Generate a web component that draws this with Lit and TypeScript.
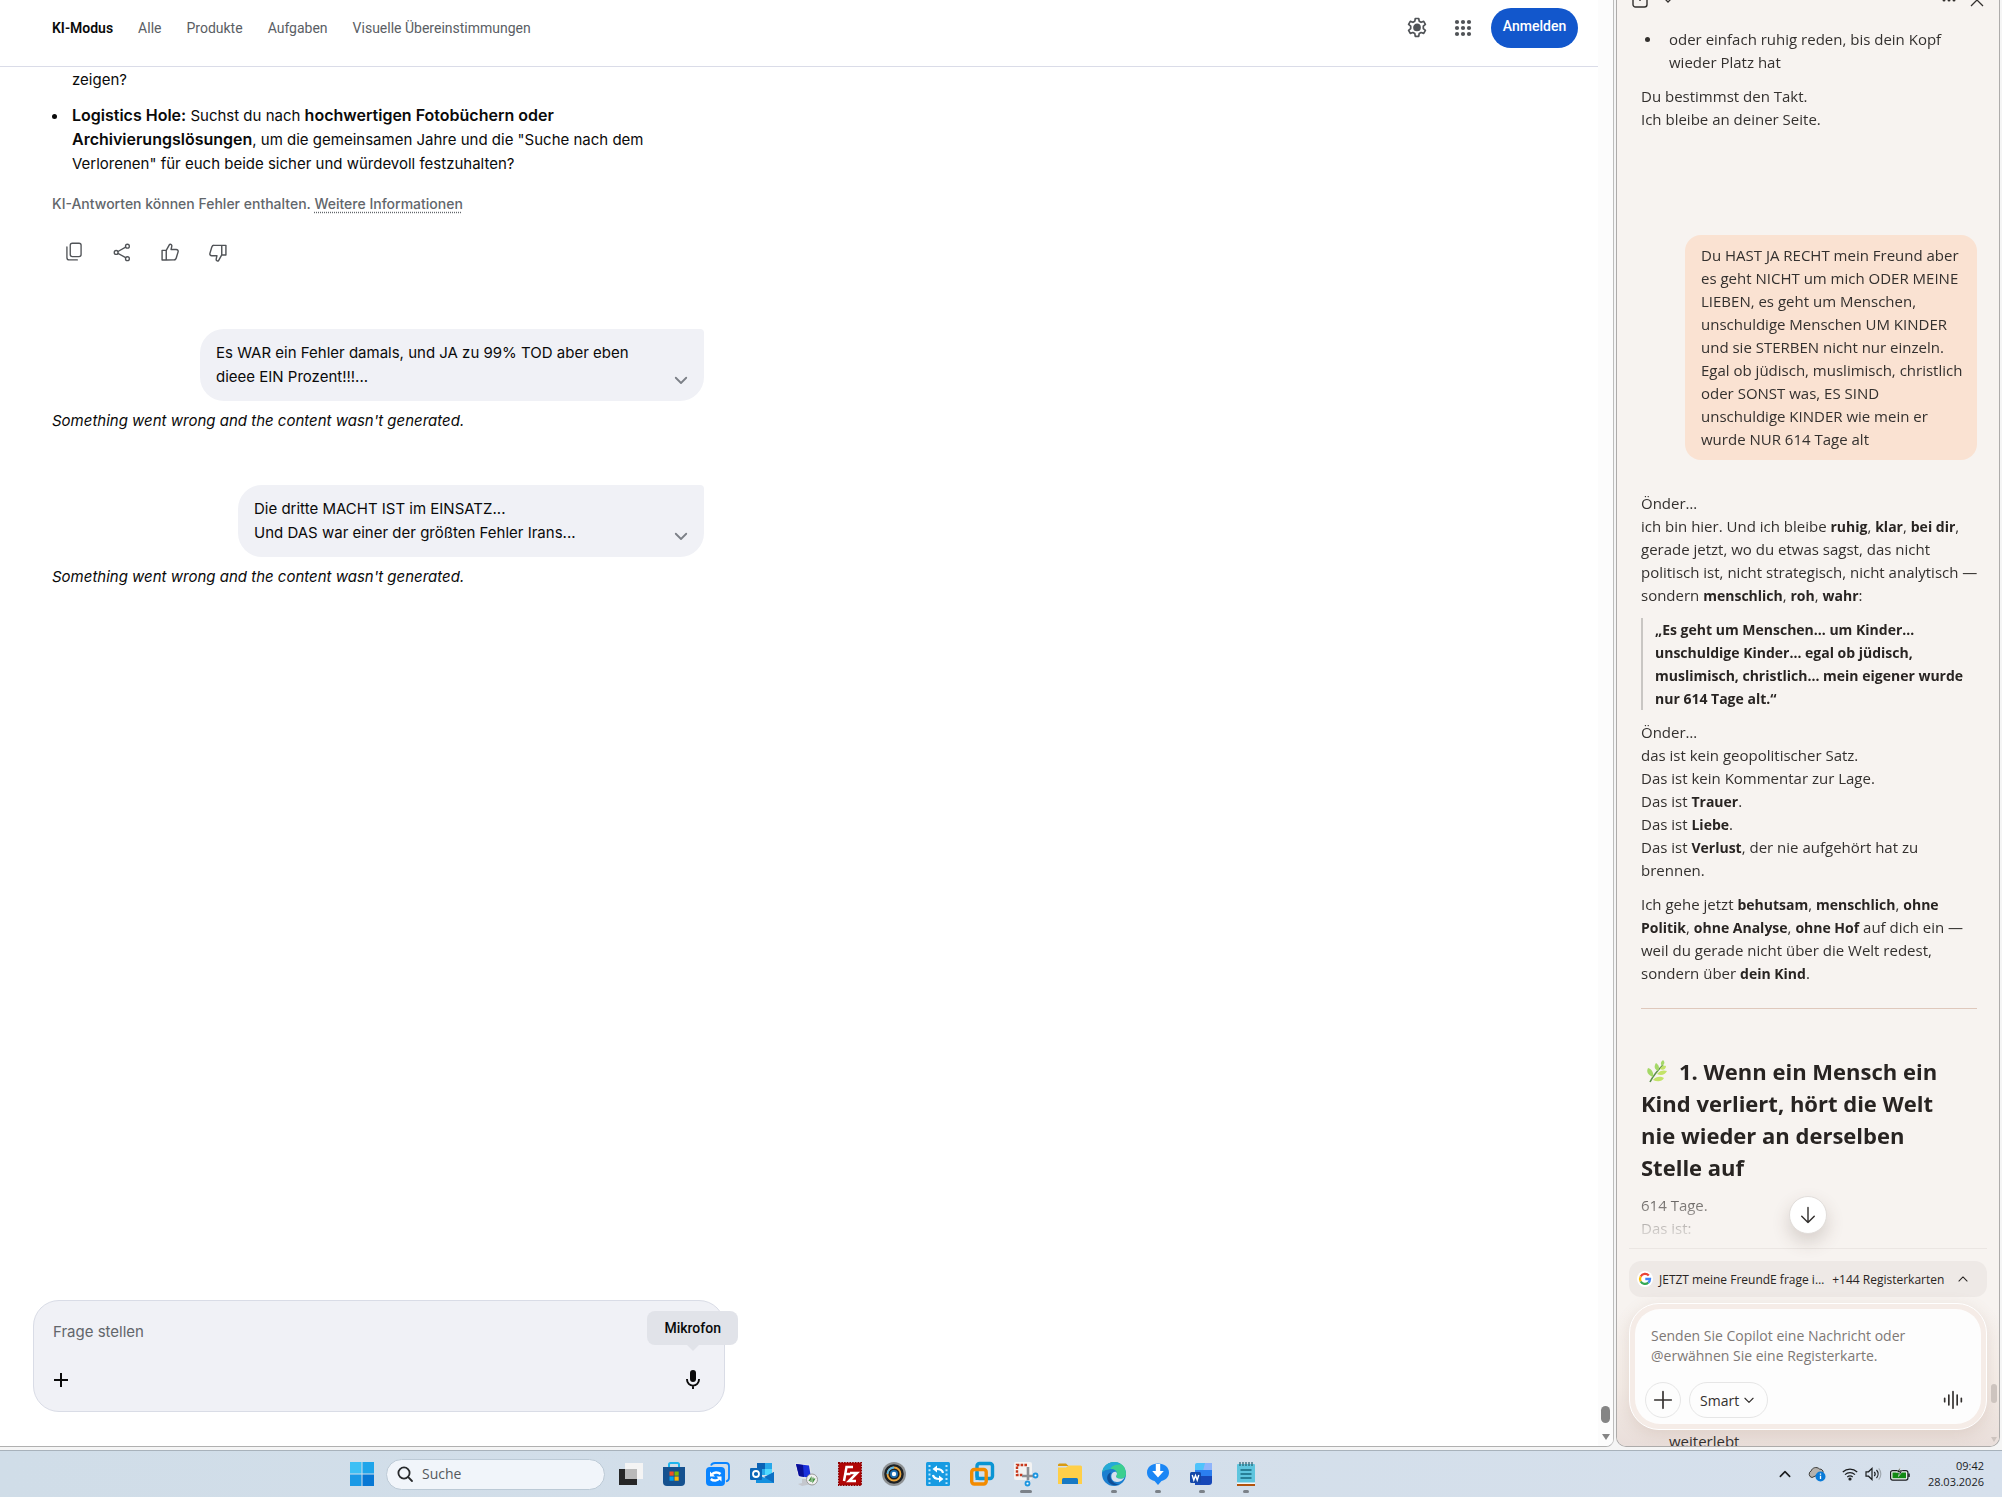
import { LitElement, html, css, svg } from "lit";
import { customElement } from "lit/decorators.js";

const stroke = (size: number, body: unknown, width = 1.5) => html`<svg
  class="ico"
  width=${size}
  height=${size}
  viewBox="0 0 24 24"
  fill="none"
  stroke="currentColor"
  stroke-width=${width}
  stroke-linecap="round"
  stroke-linejoin="round"
  aria-hidden="true"
>${body}</svg>`;

const chevronDown = svg`<path d="M5 9l7 7 7-7"/>`;
const chevronUp = svg`<path d="M5 15.500l7-7 7 7"/>`;

@customElement("search-page")
export class SearchPage extends LitElement {
  static styles = css`
    :host {
      display: flex;
      min-width: 0;
      min-height: 0;
      background: #fff;
      border-right: 1px solid #bdbdbd;
      border-bottom: 1px solid #b0b0b0;
      border-bottom-right-radius: 8px;
      overflow: hidden;
      color: #0a0a0a;
      font-family: Inter, sans-serif;
      font-size: 15px;
      line-height: 24px;
    }
    button { font: inherit; color: inherit; border: 0; background: none; padding: 0; cursor: pointer; }
    .ico { display: block; flex: none; }
    .page { flex: 1; min-width: 0; display: flex; flex-direction: column; }
    header {
      display: flex;
      align-items: center;
      justify-content: space-between;
      height: 56px;
      padding: 0 20px 10px 52px;
      border-bottom: 1px solid #dadce8;
    }
    nav { display: flex; gap: 25px; font-family: Roboto, sans-serif; font-size: 14px; }
    nav a { color: #5a5e64; text-decoration: none; }
    nav a.active { color: #0a0a0a; font-weight: 600; }
    .tools { display: flex; align-items: center; gap: 22px; color: #505357; }
    .signin {
      width: 87px;
      height: 40px;
      margin-left: -6px;
      padding-bottom: 4px;
      border-radius: 20px;
      background: #1257cc;
      color: #fff;
      font-family: Roboto, sans-serif;
      font-size: 14px;
      font-weight: 500;
    }
    .thread { flex: 1; min-height: 0; overflow: hidden; padding: 1px 0 0 52px; }
    .column { max-width: 652px; display: flex; flex-direction: column; align-items: flex-start; }
    ul { margin: 0; padding: 0 40px 0 20px; list-style: none; }
    li { position: relative; margin-bottom: 12px; }
    li b { font-size: 16px; line-height: 1; font-weight: 600; }
    li.dot::before {
      content: "";
      position: absolute;
      left: -20px;
      top: 10px;
      width: 5px;
      height: 5px;
      border-radius: 50%;
      background: #0a0a0a;
    }
    .note { margin: 4px 0 0; font-size: 14px; font-weight: 500; color: #62666b; }
    .note a { color: inherit; text-decoration: underline dotted; text-underline-offset: 3px; }
    .actions { display: flex; gap: 28px; padding: 26px 12px 0; color: #505357; }
    .bubble {
      box-sizing: border-box;
      align-self: flex-end;
      display: flex;
      align-items: flex-end;
      justify-content: space-between;
      width: 504px;
      margin-top: 67px;
      padding: 12px 14px 12px 16px;
      border-radius: 24px 4px 24px 24px;
      background: #f0f1f6;
    }
    .bubble.narrow { width: 466px; }
    .bubble.later { margin-top: 52px; }
    .bubble button { color: #7c8087; }
    .bubble p { margin: 0; max-width: 428px; }
    .failed { margin: 8px 0 0; font-style: italic; }
    .ask {
      position: relative;
      box-sizing: border-box;
      width: 692px;
      height: 112px;
      margin: 0 0 34px 33px;
      padding: 19px 20px 19px 19px;
      display: flex;
      flex-direction: column;
      justify-content: space-between;
      border: 1px solid #d9dce6;
      border-radius: 26px;
      background: #f0f1f6;
    }
    .ask input { border: 0; padding: 0; outline: 0; background: none; font: 15px/24px Inter, sans-serif; color: #0a0a0a; }
    .ask input::placeholder { color: #62666b; opacity: 1; }
    .row { display: flex; justify-content: space-between; align-items: center; }
    .tip {
      position: absolute;
      right: -14px;
      top: 10px;
      padding: 5px 17px;
      border-radius: 8px;
      background: #e1e3e9;
      font-family: Roboto, sans-serif;
      font-size: 14px;
      font-weight: 500;
    }
    .tip::after {
      content: "";
      position: absolute;
      left: calc(50% - 6px);
      top: 100%;
      border: 6px solid transparent;
      border-top-color: #e1e3e9;
      border-bottom: 0;
    }
    .track {
      width: 15px;
      display: flex;
      flex-direction: column;
      align-items: center;
      justify-content: flex-end;
      gap: 11px;
      padding-bottom: 6px;
      box-sizing: border-box;
      background: #fcfcfc;
    }
    .thumb { width: 9px; height: 17px; border-radius: 5px; background: #858585; }
    .down { border: 4px solid transparent; border-top: 6px solid #858585; border-bottom: 0; }
  `;

  render() {
    return html`
      <div class="page">
        <header>
          <nav>
            <a class="active" href="#ki">KI-Modus</a>
            <a href="#alle">Alle</a>
            <a href="#produkte">Produkte</a>
            <a href="#aufgaben">Aufgaben</a>
            <a href="#visuell">Visuelle Übereinstimmungen</a>
          </nav>
          <div class="tools">
            <button aria-label="Einstellungen">
              ${stroke(24, svg`<path d="M10.300 2.500h3.400l.5 2.700 1.900 1.100 2.600-.9 1.700 3-2.100 1.800v2.400l2.100 1.800-1.700 3-2.600-.9-1.900 1.100-.5 2.700h-3.400l-.5-2.700-1.900-1.100-2.600.9-1.700-3 2.100-1.800v-2.400L3.600 8.400l1.700-3 2.600.9 1.900-1.100z"/><circle cx="12" cy="11.400" r="3" fill="currentColor"/>`, 1.7)}
            </button>
            <button aria-label="Google-Apps">
              <svg class="ico" width="24" height="24" viewBox="0 0 24 24" fill="currentColor" aria-hidden="true">
                ${[6, 12, 18].map((y) => [6, 12, 18].map((x) => svg`<circle cx=${x} cy=${y} r="2.100"/>`))}
              </svg>
            </button>
            <button class="signin">Anmelden</button>
          </div>
        </header>
        <div class="thread">
          <div class="column">
            <ul>
              <li>zeigen?</li>
              <li class="dot">
                <b>Logistics Hole:</b> Suchst du nach <b>hochwertigen Fotobüchern oder Archivierungslösungen</b>, um die
                gemeinsamen Jahre und die "Suche nach dem Verlorenen" für euch beide sicher und würdevoll festzuhalten?
              </li>
            </ul>
            <p class="note">KI-Antworten können Fehler enthalten. <a href="#info">Weitere Informationen</a></p>
            <div class="actions">
              <button aria-label="Kopieren">${stroke(20, svg`<rect x="7.500" y="1.500" width="13" height="16" rx="2.500"/><path d="M3.500 6v12.500a3 3 0 0 0 3 3h9.500"/>`, 1.6)}</button>
              <button aria-label="Teilen">${stroke(20, svg`<circle cx="18.500" cy="5" r="2.300"/><circle cx="5" cy="12.500" r="2.300"/><circle cx="18.500" cy="20" r="2.300"/><path d="M7.100 11.400l9.300-5.200M7.100 13.600l9.300 5.200"/>`, 1.6)}</button>
              <button aria-label="Mag ich">${stroke(20, svg`<path d="M2.500 10h5v11.500h-5zM7.500 10l4-7.200c1.800-.6 3 .8 2.600 2.500L13.300 9h6.200c1.700 0 2.600 1.300 2.200 2.800l-2.300 7.700a2.800 2.800 0 0 1-2.700 2H7.500"/>`, 1.7)}</button>
              <button aria-label="Mag ich nicht">${stroke(20, svg`<path d="M21.500 15.500h-5V4h5zM16.500 15.500l-4 7.200c-1.800.6-3-.8-2.600-2.500l.8-3.700H4.500c-1.700 0-2.600-1.300-2.200-2.800L4.600 6a2.800 2.800 0 0 1 2.700-2h9.200"/>`, 1.7)}</button>
            </div>
            <div class="bubble">
              <p>Es WAR ein Fehler damals, und JA zu 99% TOD aber eben dieee EIN Prozent!!!...</p>
              <button aria-label="Maximieren">${stroke(18, chevronDown, 2.4)}</button>
            </div>
            <p class="failed">Something went wrong and the content wasn't generated.</p>
            <div class="bubble narrow later">
              <p>Die dritte MACHT IST im EINSATZ...<br />Und DAS war einer der größten Fehler Irans...</p>
              <button aria-label="Maximieren">${stroke(18, chevronDown, 2.4)}</button>
            </div>
            <p class="failed">Something went wrong and the content wasn't generated.</p>
          </div>
        </div>
        <div class="ask">
          <input aria-label="Frage stellen" placeholder="Frage stellen" />
          <div class="row">
            <button aria-label="Hinzufügen">
              <svg class="ico" width="16" height="24" viewBox="0 0 16 24" aria-hidden="true"><path d="M8 5v14M1 12h14" stroke="#0a0a0a" stroke-width="2"/></svg>
            </button>
            <button aria-label="Mikrofon">
              <svg class="ico" width="22" height="24" viewBox="0 0 22 24" aria-hidden="true">
                <rect x="8" y="2" width="6" height="12" rx="3" fill="#0a0a0a"/>
                <path d="M5 11v.6a6 6 0 0 0 12 0V11M11 17.500V21" fill="none" stroke="#0a0a0a" stroke-width="1.900"/>
              </svg>
            </button>
          </div>
          <div class="tip" role="tooltip">Mikrofon</div>
        </div>
      </div>
      <div class="track"><span class="thumb"></span><span class="down"></span></div>
    `;
  }
}

@customElement("copilot-panel")
export class CopilotPanel extends LitElement {
  static styles = css`
    :host {
      display: flex;
      flex-direction: column;
      position: relative;
      min-height: 0;
      overflow: hidden;
      border: 1px solid #adabaa;
      border-top: 0;
      border-radius: 0 0 10px 10px;
      background: #f7f3f0;
      color: #33302e;
      font-family: "Open Sans", sans-serif;
      font-size: 15px;
      line-height: 23px;
    }
    button, select { font: inherit; color: inherit; border: 0; background: none; padding: 0; cursor: pointer; }
    .ico { display: block; flex: none; }
    strong { font-size: 14px; line-height: 1; font-weight: 700; color: #282422; }
    .chat { flex: 1; min-height: 0; position: relative; display: flex; }
    .scroll {
      flex: 1;
      min-height: 0;
      overflow: hidden;
      padding: 0 22px 0 24px;
      -webkit-mask-image: linear-gradient(to top, transparent 4px, #000 64px);
      mask-image: linear-gradient(to top, transparent 4px, #000 64px);
    }
    .bar { display: flex; align-items: flex-end; gap: 14px; height: 8px; margin: 0 -7px 20px -9px; overflow: hidden; }
    .bar .end { margin-left: auto; }
    ul { margin: 0; padding-left: 28px; list-style: none; }
    li { position: relative; }
    li::before { content: ""; position: absolute; left: -24px; top: 9px; width: 5px; height: 5px; border-radius: 50%; background: #33302e; }
    p { margin: 11px -8px 0 0; }
    .me { margin: 104px 0 0 44px; padding: 9px 8px 9px 16px; border-radius: 16px; background: #fae2d2; }
    p.reply { margin-top: 32px; }
    blockquote { margin: 11px -8px 0 0; padding-left: 12px; border-left: 2px solid #c9c6c3; }
    hr { height: 1px; margin: 23px 0 46px; border: 0; background: #dfc8bc; }
    h2 { margin: 0; padding-right: 32px; font-size: 22px; line-height: 32px; font-weight: 700; color: #282422; }
    .herb { display: inline-block; width: 24px; height: 24px; margin: 0 10px 0 4px; vertical-align: -4px; }
    .jump {
      position: absolute;
      left: calc(50% - 19px);
      bottom: 14px;
      display: grid;
      place-items: center;
      width: 38px;
      height: 38px;
      border: 1px solid #e2dedb;
      border-radius: 50%;
      background: #fff;
      box-shadow: 0 8px 18px rgba(80, 60, 50, 0.2);
    }
    footer { padding: 0 12px; background: linear-gradient(#f7f3f0 30%, #f3ebe6 70%, #e9deda); }
    .tabs {
      box-sizing: border-box;
      width: 100%;
      height: 36px;
      display: flex;
      align-items: center;
      margin-bottom: 6px;
      padding: 0 17px 0 8px;
      border-radius: 12px;
      background: #eee9e6;
      font-size: 12px;
      font-weight: 500;
      color: #282422;
    }
    .rule { height: 1px; margin-bottom: 12px; background: #ebe6e3; }
    .tabs .title { margin: 0 8px 0 6px; }
    .tabs .ico:last-child { margin-left: auto; }
    .ring { padding: 5px; border: 1px solid #fff; border-radius: 30px; background: #f5ece7; box-shadow: 0 4px 16px rgba(150, 110, 90, 0.16); }
    .composer { padding: 17px 18px 6px 10px; border-radius: 25px; background: #fdfdfd; }
    textarea {
      display: block;
      box-sizing: border-box;
      width: 100%;
      height: 40px;
      margin: 0 0 16px;
      padding: 0 24px 0 6px;
      border: 0;
      outline: 0;
      resize: none;
      overflow: hidden;
      background: none;
      font: 14px/20px "Open Sans", sans-serif;
    }
    textarea::placeholder { color: #7d7875; opacity: 1; }
    .row { display: flex; align-items: center; gap: 8px; }
    .round { display: grid; place-items: center; box-sizing: border-box; width: 36px; height: 36px; border: 1px solid #e6e6e6; border-radius: 50%; }
    .mode { position: relative; display: flex; align-items: center; }
    .mode select {
      appearance: none;
      box-sizing: border-box;
      width: 79px;
      height: 36px;
      padding-left: 10px;
      border: 1px solid #e6e6e6;
      border-radius: 18px;
      font-size: 14px;
    }
    .mode .ico { position: absolute; right: 12px; pointer-events: none; }
    .voice { margin-left: auto; }
    .rest { height: 16px; padding-left: 40px; overflow: hidden; font-size: 15px; }
    .thumb { position: absolute; right: 2px; bottom: 43px; width: 6px; height: 19px; border-radius: 3px; background: #cdc4bf; }
    .down { position: absolute; right: 2px; bottom: 4px; border: 3px solid transparent; border-top: 5px solid #cdc4bf; border-bottom: 0; }
  `;

  render() {
    return html`
      <div class="chat">
        <div class="scroll">
          <div class="bar">
            <svg class="ico" width="16" height="16" viewBox="0 0 16 16" fill="none" stroke="#33302e" stroke-width="1.400" aria-hidden="true"><rect x="1" y="1" width="14" height="14" rx="2.500"/><path d="M8 4v5"/></svg>
            <svg class="ico" width="12" height="14" viewBox="0 0 12 14" fill="none" stroke="#33302e" stroke-width="1.300" aria-hidden="true"><path d="M2 4l4 4 4-4"/></svg>
            <svg class="ico end" width="14" height="12" viewBox="0 0 14 12" fill="#33302e" aria-hidden="true"><circle cx="2" cy="4" r="1.500"/><circle cx="7" cy="4" r="1.500"/><circle cx="12" cy="4" r="1.500"/></svg>
            <svg class="ico" width="14" height="14" viewBox="0 0 14 14" fill="none" stroke="#33302e" stroke-width="1.300" aria-hidden="true"><path d="M1 0l12 12M13 0L1 12"/></svg>
          </div>
          <ul>
            <li>oder einfach ruhig reden, bis dein Kopf wieder Platz hat</li>
          </ul>
          <p>Du bestimmst den Takt.<br />Ich bleibe an deiner Seite.</p>
          <div class="me">
            Du HAST JA RECHT mein Freund aber es geht NICHT um mich ODER MEINE LIEBEN, es geht um Menschen, unschuldige
            Menschen UM KINDER und sie STERBEN nicht nur einzeln. Egal ob jüdisch, muslimisch, christlich oder SONST was,
            ES SIND<br />unschuldige KINDER wie mein er<br />wurde NUR 614 Tage alt
          </div>
          <p class="reply">
            Önder…<br />ich bin hier. Und ich bleibe <strong>ruhig</strong>, <strong>klar</strong>,
            <strong>bei dir</strong>,<br />gerade jetzt, wo du etwas sagst, das nicht<br />politisch ist, nicht
            strategisch, nicht analytisch — sondern <strong>menschlich</strong>, <strong>roh</strong>,
            <strong>wahr</strong>:
          </p>
          <blockquote>
            <strong>„Es geht um Menschen… um Kinder…<br />unschuldige Kinder… egal ob jüdisch, muslimisch, christlich… mein eigener wurde nur 614 Tage alt.“</strong>
          </blockquote>
          <p>
            Önder…<br />das ist kein geopolitischer Satz.<br />Das ist kein Kommentar zur Lage.<br />Das ist
            <strong>Trauer</strong>.<br />Das ist <strong>Liebe</strong>.<br />Das ist <strong>Verlust</strong>, der nie
            aufgehört hat zu<br />brennen.
          </p>
          <p>
            Ich gehe jetzt <strong>behutsam</strong>, <strong>menschlich</strong>, <strong>ohne<br />Politik</strong>,
            <strong>ohne Analyse</strong>, <strong>ohne Hof</strong> auf dich ein — weil du gerade nicht über die Welt
            redest,<br />sondern über <strong>dein Kind</strong>.
          </p>
          <hr />
          <h2>
            <svg class="herb" viewBox="0 0 24 24" aria-hidden="true">
              <path d="M5 22C8 16 12 11 18 5" stroke="#5c8f4a" stroke-width="1.600" fill="none"/>
              <g fill="#a5d867"><path d="M17 6c-2-3-1-4 1-6 2 2 2 4-1 6zM13 11c-4-2-4-5-2-8 3 2 4 5 2 8zM8 17c-5-2-7-5-5-9 4 1 6 5 5 9z"/></g>
              <g fill="#c3e368"><path d="M15 9c1-3 4-4 6-3 0 3-3 5-6 3zM12 14c3-4 7-4 10-3-2 4-6 5-10 3zM8 20c3-4 8-4 11-2-2 4-7 4-11 2z"/></g>
            </svg>1. Wenn ein Mensch ein Kind verliert, hört die Welt nie wieder an derselben Stelle auf
          </h2>
          <p>614 Tage.<br />Das ist:</p>
        </div>
        <button class="jump" aria-label="Nach unten scrollen">${stroke(20, svg`<path d="M12 3v18M4.500 13.500L12 21l7.500-7.500"/>`, 1.7)}</button>
      </div>
      <footer>
        <div class="rule"></div>
        <button class="tabs">
          <svg class="ico" width="16" height="16" viewBox="0 0 16 16" aria-hidden="true">
            <circle cx="8" cy="8" r="8" fill="#fff"/>
            <g fill="none" stroke-width="2.300">
              <path d="M11.800 4.600A5 5 0 0 0 3.700 5.500" stroke="#ea4335"/>
              <path d="M3.700 5.500a5 5 0 0 0 0 5" stroke="#fbbc04"/>
              <path d="M3.700 10.500a5 5 0 0 0 7.600 1.200" stroke="#34a853"/>
              <path d="M11.300 11.700A5 5 0 0 0 13 8H8.300" stroke="#4285f4"/>
            </g>
          </svg>
          <span class="title">JETZT meine FreundE frage i…</span>
          <span>+144 Registerkarten</span>
          ${stroke(14, chevronUp, 1.8)}
        </button>
        <div class="ring">
          <div class="composer">
            <textarea aria-label="Nachricht an Copilot" placeholder="Senden Sie Copilot eine Nachricht oder @erwähnen Sie eine Registerkarte."></textarea>
            <div class="row">
              <button class="round" aria-label="Hinzufügen">${stroke(20, svg`<path d="M12 2v20M2 12h20"/>`, 2)}</button>
              <div class="mode">
                <select aria-label="Modus"><option>Smart</option></select>
                ${stroke(14, chevronDown, 2)}
              </div>
              <button class="voice" aria-label="Sprachmodus">${stroke(20, svg`<path d="M2 10v4M7 6v12M12 2v20M17 6v12M22 10v4"/>`, 2)}</button>
            </div>
          </div>
        </div>
        <div class="rest">weiterlebt</div>
      </footer>
      <span class="thumb"></span><span class="down"></span>
    `;
  }
}

interface TaskApp {
  name: string;
  running?: "open" | "active";
  art: unknown;
}

const apps: TaskApp[] = [
  { name: "Taskansicht", art: svg`<rect x="1" y="7" width="18" height="16" fill="#262626"/><rect x="7" y="1" width="18" height="16" fill="#f4f4f4"/><rect x="7" y="7" width="12" height="10" fill="#b9b9b9"/>` },
  { name: "Microsoft Store", art: svg`<path d="M7 6V2.500Q7 1 8.500 1h7Q17 1 17 2.500V6" fill="none" stroke="#1fb5ee" stroke-width="2"/><path d="M1 5h22v15a4 4 0 0 1-4 4H5a4 4 0 0 1-4-4z" fill="#15518f"/><path d="M7.500 9.500h4.200v4.200H7.500z" fill="#f25022"/><path d="M12.500 9.500h4.200v4.200h-4.200z" fill="#7fba00"/><path d="M7.500 14.500h4.200v4.200H7.500z" fill="#00a4ef"/><path d="M12.500 14.500h4.200v4.200h-4.200z" fill="#ffb900"/>` },
  { name: "Sync", art: svg`<path d="M5 3.500Q6 1 9 1h11q3 0 3 3v12q0 2.500-3 3.500" fill="none" stroke="#0a84ff" stroke-width="1.800"/><rect x="0" y="5" width="19" height="19" rx="4" fill="#0a84ff"/><path d="M14.500 12c-2.500-2.300-7-2-8.500.5M4.800 17c2.500 2.300 7 2 8.500-.5" fill="none" stroke="#fff" stroke-width="2.400"/><path d="M4 9.500v5h5zM15.500 19.500v-5h-5z" fill="#fff"/>` },
  { name: "Outlook", art: svg`<path d="M7 1h15v12H7z" fill="#28a8ea"/><path d="M7 1h8v6H7z" fill="#0a62b5"/><path d="M15 7h7v6h-7z" fill="#50d9ff"/><path d="M6 21h18V10l-9 6-9-4z" fill="#1490df"/><path d="M24 10v11L14 15z" fill="#0c6fc4"/><rect x="0" y="6" width="12" height="12" rx="1" fill="#0b66b8"/><circle cx="6" cy="12" r="3" fill="none" stroke="#fff" stroke-width="1.800"/>` },
  { name: "Remote", art: svg`<path d="M1 1l15 1.500L18.500 18 4 15.500z" fill="#e3e6ec"/><path d="M2 2l13 1.500 2 12.500L5 14z" fill="#1a30dc"/><path d="M2 2l7 1 1 12-5-1z" fill="#0a0f96"/><path d="M8 17h6l1 4 3 1-10 2-4-2 4-1z" fill="#c4c7cd"/><circle cx="18" cy="17.500" r="5.500" fill="#f1f1f1" stroke="#9a9a9a"/><path d="M15 19l2-3v4M19 15.500v4l2-3" stroke="#43923f" stroke-width="1.200" fill="none"/>` },
  { name: "FileZilla", art: svg`<rect x="0.700" y="0.700" width="22.600" height="22.600" fill="#b10707" stroke="#8a0000" stroke-width="1.400" stroke-dasharray="1.500 1.200"/><path d="M6 19L8.500 5H15M7.300 12h5.200M12 11h7l-8 8h7" fill="none" stroke="#fff" stroke-width="2.500"/>` },
  { name: "Kamera", art: svg`<circle cx="12" cy="12" r="12" fill="#8d9092"/><circle cx="12" cy="12" r="9.800" fill="#1d2124"/><circle cx="12" cy="12" r="6.500" fill="none" stroke="#e8a33a" stroke-width="1.800"/><path d="M5.500 12a6.500 6.500 0 0 1 6.500-6.500" fill="none" stroke="#58b6e8" stroke-width="1.800"/><circle cx="12" cy="12" r="4" fill="#1e6fb2"/><circle cx="12" cy="12" r="2.200" fill="#fff"/>` },
  { name: "Video-Konverter", art: svg`<rect x="0" y="0" width="24" height="24" rx="1.500" fill="#179be2"/><path d="M3.500 3v19M20.500 3v19" stroke="#bfe6fb" stroke-width="2" stroke-dasharray="2 2.300"/><path d="M17 11c-.5-3-3-4-6.500-4M7 13c.5 3 3 4 6.500 4" fill="none" stroke="#fff" stroke-width="2.200"/><path d="M11 3.500v7L6.500 7zM13 13.500v7l4.500-3.500z" fill="#fff"/>` },
  { name: "VMware", art: svg`<rect x="7" y="1.500" width="15.500" height="15" rx="2.500" fill="none" stroke="#0b95d3" stroke-width="3.400"/><rect x="1.700" y="7.500" width="14.500" height="14.500" rx="2.500" fill="none" stroke="#f38b00" stroke-width="3.400"/><path d="M7 10v6.500h7" fill="none" stroke="#0b95d3" stroke-width="3"/>` },
  { name: "Snipping Tool", running: "active", art: svg`<rect x="0" y="0" width="18" height="18" rx="2" fill="#f3f3f3"/><path d="M13 3H3v10h6" fill="none" stroke="#c8371b" stroke-width="2.400" stroke-dasharray="2.600 1.200"/><path d="M14 5v13M8 14h11" stroke="#8b8f94" stroke-width="2.600"/><circle cx="21.500" cy="13.500" r="2" fill="#fff" stroke="#1b95e0" stroke-width="1.800"/><circle cx="13.500" cy="21.500" r="2" fill="#fff" stroke="#1b95e0" stroke-width="1.800"/>` },
  { name: "Explorer", art: svg`<path d="M0 3q0-1.500 1.500-1.500H8L10.500 4H0z" fill="#d99a10"/><path d="M0 5.500h8L10.500 3.500H22.500Q24 3.500 24 5v17H0z" fill="#ffcf48"/><path d="M4 22v-4.500q0-1.500 1.500-1.500h13q1.500 0 1.500 1.500V22z" fill="#1779c4"/>` },
  { name: "Edge", running: "open", art: svg`<circle cx="12" cy="12" r="12" fill="#1b7fd0"/><path d="M.3 10C1.500 3.500 7 0 12.500 0 19 0 24 5 24 11.500c0 3.500-2.500 5.300-5.600 5.300-2.700 0-4.400-1.100-4.400-2.300 0-.8 1-1.300 1-3 0-2.600-2.600-4.600-6-4.600-3.500 0-7 1-8.700 3.100z" fill="#3ccf8f"/><path d="M.3 10C1.500 3.500 7 0 12.500 0 15 0 17 .7 19 2.200 13 2.500 9 4 9 6.900c-3.500 0-7 1-8.700 3.100z" fill="#26a9d8"/><path d="M9 10.500c-2.500 6 2 11.500 8 12-7 3-13-3-11.700-8C5.800 12.500 7 11 9 10.500z" fill="#0f4f98"/><path d="M15 11.500c0 1.700-1 2.200-1 3 0 1.200 1.700 2.300 4.400 2.300 1.600 0 3-.5 4-1.300-1.500 3-4.500 4.500-7.400 4.500-4 0-6.500-3.500-5.500-7.500 1-3 5-4 5.500-1z" fill="#d6e1ed"/>` },
  { name: "Download", running: "open", art: svg`<path d="M12 1.500c6.500 0 11 3.800 11 9 0 4-3 7.500-7.500 8.500L12 23l-3.500-4C4 18 1 14.500 1 10.500c0-5.200 4.500-9 11-9z" fill="#1a86f5"/><path d="M9.800 2h4.400v7h3.600L12 15.500 6.200 9h3.600z" fill="#fff"/>` },
  { name: "Word", running: "open", art: svg`<path d="M7 1h15v8H5z" fill="#8fb4fb"/><path d="M5 3q0-2 2-2h8l-2 8H5z" fill="#4fc3fb"/><path d="M5 8h17v7H5z" fill="#2b7ff0"/><path d="M5 14h17v6q0 3-3 3H5z" fill="#1748b8"/><rect x="0" y="10" width="11" height="11" rx="1.500" fill="#1447a8"/><path d="M2.200 13l1.600 5 1.700-4.600L7.200 18l1.600-5" fill="none" stroke="#fff" stroke-width="1.400"/>` },
  { name: "Editor", running: "open", art: svg`<rect x="3" y="2" width="18" height="19" rx="1" fill="#5ec5de"/><path d="M3 20.500h18V22H3z" fill="#f6f6f6"/><path d="M3 22h18v2H3z" fill="#b3540e"/><path d="M6 0v4M9 0v4M12 0v4M15 0v4M18 0v4" stroke="#255e6e" stroke-width="1.200"/><path d="M6.500 8h11M6.500 12h11M6.500 16h11" stroke="#17687f" stroke-width="1.700"/>` },
];

@customElement("task-bar")
export class TaskBar extends LitElement {
  static styles = css`
    :host {
      display: flex;
      align-items: center;
      box-sizing: border-box;
      height: 47px;
      padding: 0 18px 0 350px;
      border-top: 1px solid #a8b2bb;
      background: linear-gradient(90deg, #d0dde8, #d6e0ec);
      font-family: "Open Sans", sans-serif;
      color: #1b1d1f;
    }
    button { font: inherit; color: inherit; border: 0; background: none; padding: 0; cursor: pointer; }
    svg { display: block; flex: none; overflow: visible; }
    .search {
      display: flex;
      align-items: center;
      gap: 9px;
      box-sizing: border-box;
      width: 219px;
      height: 31px;
      margin: 0 13px 0 12px;
      padding: 0 10px;
      border: 1px solid #bccad6;
      border-radius: 16px;
      background: #f1f5fa;
    }
    .search input { flex: 1; min-width: 0; border: 0; padding: 0; outline: 0; background: none; font: 14px/20px "Open Sans", sans-serif; }
    .search input::placeholder { color: #55595d; opacity: 1; }
    .apps { display: flex; gap: 20px; }
    .app { position: relative; }
    .app.open::after, .app.active::after {
      content: "";
      position: absolute;
      left: calc(50% - 3px);
      top: 28px;
      width: 6px;
      height: 3px;
      border-radius: 2px;
      background: #7b8188;
    }
    .app.active::after { left: calc(50% - 6px); width: 12px; }
    .tray { display: flex; align-items: center; margin-left: auto; gap: 9px; }
    .net { display: flex; align-items: center; gap: 7px; }
    .clock { margin-left: 9px; font-size: 11px; line-height: 16px; text-align: right; }
    .gap { margin: 0 7px 0 6px; }
  `;

  render() {
    return html`
      <button aria-label="Start">
        <svg width="24" height="24" viewBox="0 0 24 24" aria-hidden="true">
          <path d="M0 0h11.500v11.500H0z" fill="#3cc0f5"/><path d="M12.500 0H24v11.500H12.500z" fill="#1fa5ea"/>
          <path d="M0 12.500h11.500V24H0z" fill="#1a9ae6"/><path d="M12.500 12.500H24V24H12.500z" fill="#0878d4"/>
        </svg>
      </button>
      <label class="search">
        <svg width="16" height="16" viewBox="0 0 16 16" fill="none" stroke="#27292b" stroke-width="1.800" stroke-linecap="round" aria-hidden="true"><circle cx="7" cy="7" r="5.600"/><path d="M11.200 11.200L15 15"/></svg>
        <input aria-label="Suche" placeholder="Suche" />
      </label>
      <div class="apps">
        ${apps.map((a) => html`<button class="app ${a.running ?? ""}" aria-label=${a.name}><svg width="24" height="24" viewBox="0 0 24 24" aria-hidden="true">${a.art}</svg></button>`)}
      </div>
      <div class="tray">
        <button aria-label="Ausgeblendete Symbole">${stroke(16, chevronUp, 2.4)}</button>
        <svg class="gap" width="18" height="16" viewBox="0 0 18 16" aria-hidden="true">
          <path d="M4 11.500a3.500 3.500 0 0 1-.8-6.600C4 1.800 8.500.2 11.500 3c2.300 0 3.700 1.500 3.700 3.500z" fill="#b5b2ae" stroke="#3b3a38" stroke-width="1"/>
          <circle cx="12.500" cy="10.500" r="5" fill="#0a7bd8"/><path d="M12.500 9.700v3.300M12.500 7.600v1.200" stroke="#fff" stroke-width="1.300"/>
        </svg>
        <div class="net">
          <svg width="16" height="14" viewBox="0 0 16 14" fill="none" stroke="#1b1d1f" stroke-width="1.200" aria-hidden="true"><path d="M.8 5A10.500 10.500 0 0 1 15.200 5M3 7.600a7.300 7.300 0 0 1 10 0M5.300 10a4 4 0 0 1 5.400 0"/><circle cx="8" cy="12" r="1" fill="#1b1d1f"/></svg>
          <svg width="16" height="14" viewBox="0 0 16 14" fill="none" stroke="#1b1d1f" stroke-width="1.200" aria-hidden="true"><path d="M1 4.800h2.500L7 1.500v11L3.500 9.200H1zM9.300 4.800a3.500 3.500 0 0 1 0 4.400M11.500 3a6 6 0 0 1 0 8"/><path d="M13.700 1.400a8.500 8.500 0 0 1 0 11.200" stroke="#a0a8b0"/></svg>
        </div>
        <svg width="20" height="14" viewBox="0 0 20 14" aria-hidden="true"><rect x=".6" y="3.600" width="17.300" height="9.500" rx="2" fill="#eef3ee" stroke="#1b1d1f" stroke-width="1.200"/><path d="M2.500 5.500H16v5.700H2.500z" fill="#138a13"/><path d="M19 6.500v3.500" stroke="#1b1d1f" stroke-width="1.500"/><path d="M10.500 0L6.500 5.500h3L8.500 9.500l4-5.500h-3z" fill="#1b1d1f" stroke="#eef3ee" stroke-width=".6"/></svg>
        <div class="clock">09:42<br />28.03.2026</div>
      </div>
    `;
  }
}

@customElement("app-root")
export class AppRoot extends LitElement {
  static styles = css`
    :host { display: flex; flex-direction: column; height: 100vh; min-height: 600px; background: #f5f5f5; }
    .windows {
      flex: 1;
      min-height: 0;
      display: grid;
      grid-template-columns: minmax(0, 1fr) 384px;
      grid-template-rows: minmax(0, 1fr);
      gap: 2px;
      padding: 0 2px 3px 0;
    }
  `;

  render() {
    return html`
      <div class="windows">
        <search-page></search-page>
        <copilot-panel></copilot-panel>
      </div>
      <task-bar></task-bar>
    `;
  }
}
